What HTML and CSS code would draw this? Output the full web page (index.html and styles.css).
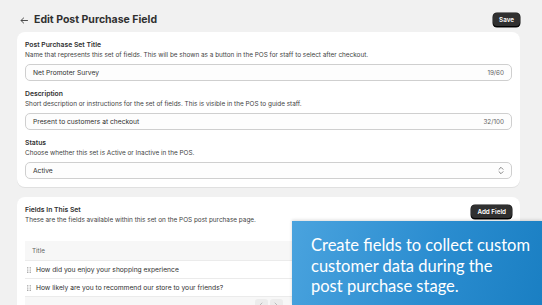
FILE: index.html
```html
<!DOCTYPE html>
<html lang="en">
<head>
    <meta charset="UTF-8">
    <title>Edit Post Purchase Field</title>
    <link rel="stylesheet" href="styles.css">
</head>
<body>
    <div class="page">
        <!-- Header -->
        <div class="header">
            <div class="header-left">
                <svg class="back" width="8" height="7" viewBox="0 0 8 7"><path d="M7.5 3.5H1M3.6 1 1 3.5 3.6 6" fill="none" stroke="#4a4a4a" stroke-width="1" stroke-linecap="round" stroke-linejoin="round"/></svg>
                <h1>Edit Post Purchase Field</h1>
            </div>
            <button class="btn">Save</button>
        </div>

        <!-- Set details -->
        <div class="card">
            <div class="field">
                <div class="label">Post Purchase Set Title</div>
                <div class="help">Name that represents this set of fields. This will be shown as a button in the POS for staff to select after checkout.</div>
                <div class="input"><span>Net Promoter Survey</span><span class="count">19/60</span></div>
            </div>
            <div class="field">
                <div class="label">Description</div>
                <div class="help">Short description or instructions for the set of fields. This is visible in the POS to guide staff.</div>
                <div class="input"><span>Present to customers at checkout</span><span class="count">32/100</span></div>
            </div>
            <div class="field">
                <div class="label">Status</div>
                <div class="help">Choose whether this set is Active or Inactive in the POS.</div>
                <div class="input"><span>Active</span>
                    <svg class="chev" width="6" height="9" viewBox="0 0 6 9"><path d="M1 3.3 3 1.3 5 3.3M1 5.7 3 7.7 5 5.7" fill="none" stroke="#777" stroke-width="0.9" stroke-linecap="round" stroke-linejoin="round"/></svg>
                </div>
            </div>
        </div>

        <!-- Fields table -->
        <div class="card">
            <div class="card-head">
                <div>
                    <div class="label">Fields In This Set</div>
                    <div class="help">These are the fields available within this set on the POS post purchase page.</div>
                </div>
                <button class="btn">Add Field</button>
            </div>
            <div class="table">
                <div class="row head">Title</div>
                <div class="row">
                    <svg class="grip" width="4" height="6" viewBox="0 0 4 6"><g fill="#6b6b6b"><circle cx="0.8" cy="0.8" r="0.6"/><circle cx="3.2" cy="0.8" r="0.6"/><circle cx="0.8" cy="3" r="0.6"/><circle cx="3.2" cy="3" r="0.6"/><circle cx="0.8" cy="5.2" r="0.6"/><circle cx="3.2" cy="5.2" r="0.6"/></g></svg>
                    How did you enjoy your shopping experience
                </div>
                <div class="row">
                    <svg class="grip" width="4" height="6" viewBox="0 0 4 6"><g fill="#6b6b6b"><circle cx="0.8" cy="0.8" r="0.6"/><circle cx="3.2" cy="0.8" r="0.6"/><circle cx="0.8" cy="3" r="0.6"/><circle cx="3.2" cy="3" r="0.6"/><circle cx="0.8" cy="5.2" r="0.6"/><circle cx="3.2" cy="5.2" r="0.6"/></g></svg>
                    How likely are you to recommend our store to your friends?
                </div>
                <div class="pager">
                    <span class="page-btn"><svg width="4" height="6" viewBox="0 0 4 6"><path d="M3 1 1 3 3 5" fill="none" stroke="#b0b0b0" stroke-width="0.8" stroke-linecap="round" stroke-linejoin="round"/></svg></span>
                    <span class="page-btn"><svg width="4" height="6" viewBox="0 0 4 6"><path d="M1 1 3 3 1 5" fill="none" stroke="#b0b0b0" stroke-width="0.8" stroke-linecap="round" stroke-linejoin="round"/></svg></span>
                </div>
            </div>
        </div>
    </div>

    <div class="promo">Create fields to collect custom<br>customer data during the<br>post purchase stage.</div>
</body>
</html>
```

FILE: styles.css
```css
body {
    margin: 0;
    background-color: #f1f1f1;
    font-family: 'Inter', sans-serif;
    color: #303030;
    overflow: hidden;
    height: 305px;
    position: relative;
}

.page {
    padding: 13px 22px 0 17px;
    display: flex;
    flex-direction: column;
    gap: 5px;
}

/* Header */
.header {
    display: flex;
    justify-content: space-between;
    align-items: center;
    height: 14px;
}

.header-left {
    display: flex;
    align-items: center;
    gap: 6px;
    padding-left: 3px;
}

h1 {
    margin: 0;
    font-size: 10.5px;
    font-weight: 700;
    line-height: 14px;
}

.btn {
    background-color: #303030;
    color: #fff;
    border: none;
    border-radius: 4px;
    font-family: 'Inter', sans-serif;
    font-size: 6.3px;
    font-weight: 600;
    padding: 0 6px;
    height: 14px;
    box-shadow: inset 0 -1px 0 #000, 0 0 0 0.5px #111;
}

/* Cards */
.card {
    background-color: #fff;
    border-radius: 8px;
    padding: 8px;
    display: flex;
    flex-direction: column;
    gap: 8px;
    box-shadow: 0 1px 0 #e0e0e0;
}

.card + .card {
    margin-top: 5px;
}

.field {
    display: flex;
    flex-direction: column;
}

.label {
    font-size: 6.8px;
    font-weight: 600;
    line-height: 10px;
}

.help {
    font-size: 6.4px;
    line-height: 10px;
    color: #3f3f3f;
}

.input {
    margin-top: 4px;
    height: 17px;
    box-sizing: border-box;
    border: 1px solid #cfcfcf;
    border-radius: 5px;
    background-color: #fdfdfd;
    display: flex;
    align-items: center;
    justify-content: space-between;
    padding: 0 7px;
    font-size: 6.7px;
}

.count {
    font-size: 6.3px;
    color: #616161;
}

/* Table */
.card-head {
    display: flex;
    justify-content: space-between;
    align-items: flex-start;
}

.table {
    margin-top: 8px;
    display: flex;
    flex-direction: column;
}

.row {
    height: 17px;
    display: flex;
    align-items: center;
    padding: 0 7px;
    font-size: 6.7px;
    border-bottom: 1px solid #ebebeb;
}

.row.head {
    background-color: #f7f7f7;
    height: 19px;
    color: #616161;
    font-size: 6.3px;
}

.row:not(.head) {
    padding-left: 2px;
}

.grip {
    margin-right: 5px;
}

.pager {
    background-color: #f7f7f7;
    height: 14px;
    display: flex;
    justify-content: center;
    gap: 2px;
    padding-top: 2px;
    box-sizing: border-box;
}

.page-btn {
    width: 13px;
    height: 11px;
    border-radius: 3px;
    background-color: #ececec;
    display: flex;
    align-items: center;
    justify-content: center;
}

/* Promo overlay */
.promo {
    position: absolute;
    left: 292px;
    top: 221px;
    width: 250px;
    height: 84px;
    box-sizing: border-box;
    padding: 14px 0 0 19px;
    background: linear-gradient(105deg, #4aa3de 0%, #2b8dd0 55%, #1a7fc3 100%);
    color: #fff;
    font-family: 'Lato', sans-serif;
    font-size: 16.5px;
    line-height: 20.5px;
    box-shadow: 0 -1px 3px rgba(0, 0, 0, 0.15);
}
```
